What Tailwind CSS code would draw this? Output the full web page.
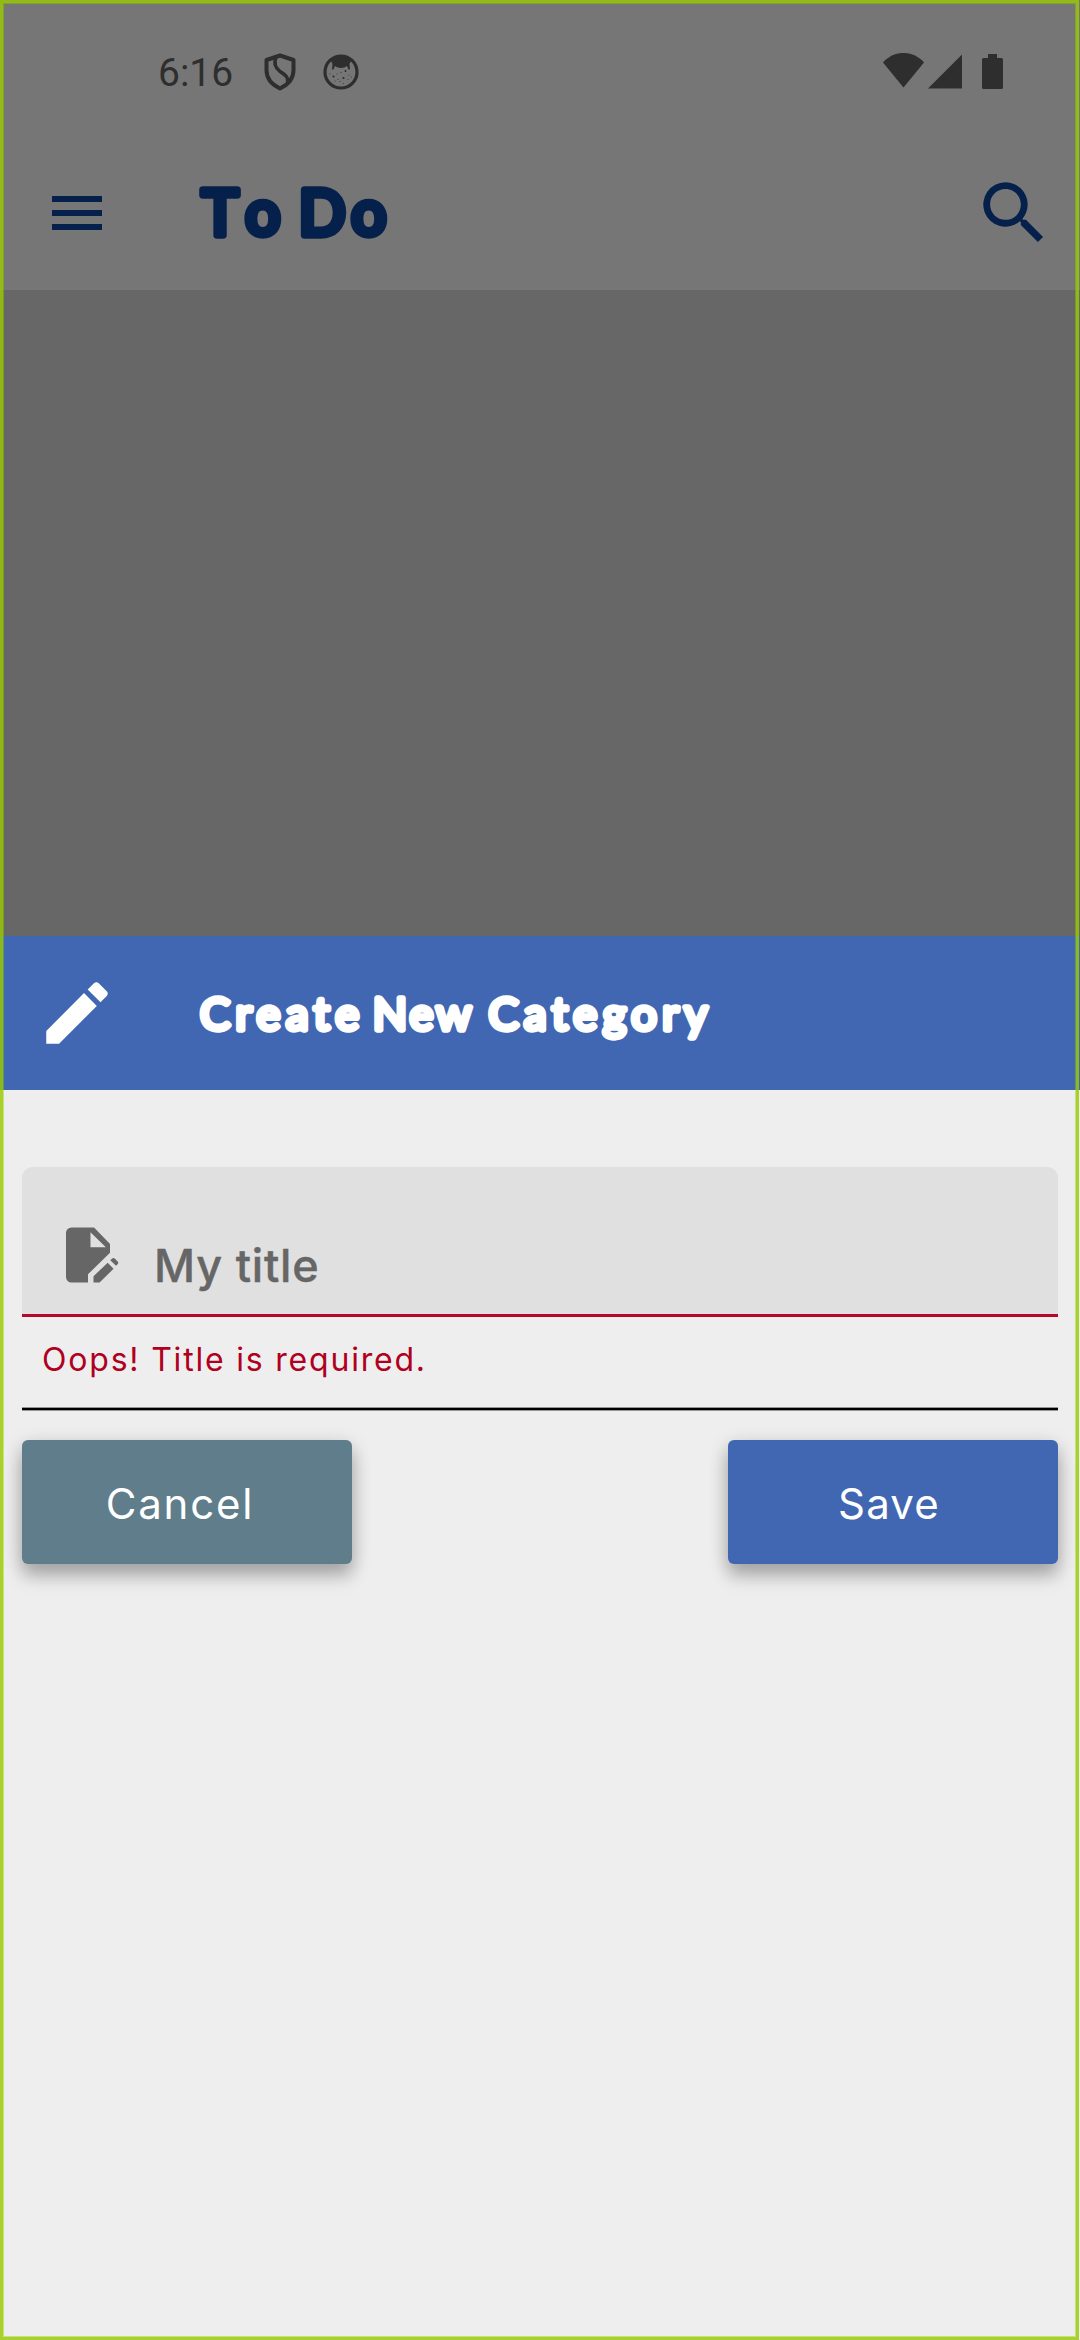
<!DOCTYPE html>
<html lang="en">
<head>
<meta charset="utf-8">
<title>To Do</title>
<script src="https://cdn.jsdelivr.net/npm/@tailwindcss/browser@4"></script>
</head>
<body class="bg-[#eee]">
<div class="relative flex flex-col w-[1080px] h-[2340px] bg-[#eee] overflow-hidden font-['Inter',sans-serif]">

  <!-- Dimmed status bar and app bar -->
  <header class="h-[290px] bg-[#767676] shrink-0">
    <div class="flex items-center h-[144px] pl-[158px] pr-[77px] text-[#2e2e2e]">
      <span class="font-['Roboto',sans-serif] text-[39px] leading-none pt-[2px]">6:16</span>
      <svg class="ml-[31px] w-[32px] h-[38px]" viewBox="0 0 32 38" fill="none" stroke="currentColor" stroke-width="4" stroke-linejoin="round">
        <path d="M16 2.5 29.5 7v10C29.5 26 23.5 32 16 35.5 8.5 32 2.5 26 2.5 17V7z"/>
        <path d="M12 4.5C9.5 10 11 14.5 16 18.5 22.5 22.5 24.5 25 23.5 29.5" stroke-width="3.5"/>
      </svg>
      <svg class="ml-[27px] w-[36px] h-[36px]" viewBox="0 0 36 36">
        <circle cx="18" cy="18" r="16" fill="none" stroke="currentColor" stroke-width="3.2"/>
        <path d="M7.500 6C13 1 23 1 28.500 6L26.500 10 27 15.500 25.500 15.500 24 12C21 14.500 15 14.500 12 12L10.500 15.500 9 15.500 9.500 10z" fill="currentColor"/>
        <g fill="currentColor">
          <circle cx="10.500" cy="22.500" r="1.100"/><circle cx="22.500" cy="17" r="1"/><circle cx="20.500" cy="24" r="1.100"/><circle cx="14" cy="20" r=".5"/><circle cx="18" cy="18.500" r=".5"/><circle cx="26" cy="21" r=".5"/><circle cx="15" cy="25.500" r=".5"/><circle cx="25" cy="25.500" r=".5"/><circle cx="12" cy="27" r=".5"/><circle cx="17" cy="27.500" r=".6"/><circle cx="20.500" cy="29.500" r=".5"/><circle cx="7" cy="20" r=".5"/><circle cx="28.500" cy="23" r=".5"/>
        </g>
      </svg>
      <svg class="ml-auto w-[41px] h-[35px] -mt-[3px]" viewBox="0 0 41 35" fill="currentColor"><path d="M0 9.500C11-3.200 30-3.200 41 9.500L20.500 34.500z"/></svg>
      <svg class="ml-[4px] w-[34px] h-[35px] -mt-[2px]" viewBox="0 0 34 35" fill="currentColor"><path d="M34 .5V34.500H0z"/></svg>
      <svg class="ml-[20px] w-[21px] h-[35px] -mt-[2px]" viewBox="0 0 21 35" fill="currentColor"><path d="M6 0h9v4h4.500A1.500 1.500 0 0 1 21 5.500v28a1.500 1.500 0 0 1-1.500 1.500h-18A1.500 1.500 0 0 1 0 33.500v-28A1.500 1.500 0 0 1 1.500 4H6z"/></svg>
    </div>
    <div class="flex items-center h-[137px] pl-[52px] pr-[25px] text-[#05204a]">
      <svg class="w-[50px] h-[34px]" viewBox="0 0 50 34" fill="currentColor"><path d="M0 0h50v6H0zM0 14h50v6H0zM0 28h50v6H0z"/></svg>
      <h1 class="ml-[97px]">
        <svg class="w-[196px] h-[81px] font-['Lato',sans-serif] text-[61px]" viewBox="0 0 196 81" fill="currentColor" stroke="currentColor" stroke-width="7.5" stroke-linejoin="round" stroke-linecap="round">
          <text x="3" y="63" textLength="78">To</text>
          <text x="100" y="63" textLength="87">Do</text>
        </svg>
      </h1>
      <svg class="ml-auto w-[82px] h-[82px]" viewBox="0 0 24 24" fill="currentColor"><path d="M9.500 3A6.500 6.500 0 0 1 16 9.500c0 1.610-.59 3.090-1.560 4.230l.27.27h.79l5 5-1.500 1.500-5-5v-.79l-.27-.27A6.500 6.500 0 1 1 9.500 3m0 2C7 5 5 7 5 9.500S7 14 9.500 14 14 12 14 9.500 12 5 9.500 5z"/></svg>
    </div>
  </header>
  <div class="h-[646px] bg-[#676767] shrink-0"></div>

  <!-- Sheet header -->
  <div class="flex items-center h-[154px] bg-[#4167b2] pl-[36px] text-white shrink-0">
    <svg class="w-[82px] h-[82px]" viewBox="0 0 24 24" fill="currentColor"><path d="M20.710 7.040c.39-.39.39-1.040 0-1.410l-2.340-2.340c-.37-.39-1.020-.39-1.410 0l-1.840 1.830 3.750 3.750M3 17.250V21h3.750L17.810 9.930l-3.750-3.750z"/></svg>
    <h2 class="ml-[79px]">
      <svg class="w-[520px] h-[80px] font-['Lato',sans-serif] text-[45px]" viewBox="0 0 520 80" fill="currentColor" stroke="currentColor" stroke-width="5.3" stroke-linejoin="round" stroke-linecap="round">
        <text x="3" y="56.500" textLength="159">Create</text>
        <text x="175.800" y="56.500" textLength="98.500">New</text>
        <text x="291.500" y="56.500" textLength="219">Category</text>
      </svg>
    </h2>
  </div>

  <!-- Form -->
  <main class="flex flex-col px-[22px] pt-[77px]">
    <div class="flex items-start h-[150px] pl-[33px] bg-[#e0e0e0] border-b-[3px] border-[#b4092a] rounded-t-[11px] text-[#666]">
      <svg class="mt-[55px] w-[66px] h-[66px]" viewBox="0 0 24 24" fill="currentColor">
        <path fill-rule="evenodd" d="M6 2h8.200L20 8v3.200l-8 7.800v3H6a2 2 0 0 1-2-2V4a2 2 0 0 1 2-2zM12.900 3.700V9.200h5.600z"/>
        <path d="M14 22v-2.300l5.150-4.850 2.150 2.150-5.100 5zM20.100 13.950l.6-.6c.35-.35.75-.35 1.100 0l.9.9c.4.4.4.800.05 1.150l-.55.55z"/>
      </svg>
      <span class="mt-[76px] ml-[33px] text-[45px] leading-[45px] font-medium tracking-[.8px] [-webkit-text-stroke:.4px_#666]">My title</span>
    </div>
    <p class="pl-[20px] mt-[26px] h-[64px] text-[32px] leading-[34px] tracking-[1.8px] text-[#b00020]">Oops! Title is required.</p>
    <div class="h-[4px] bg-black border-y border-[#959595]"></div>
    <div class="flex justify-between mt-[29px]">
      <button class="w-[330px] h-[124px] rounded-[6px] bg-[#607d8b] text-white text-[42px] leading-none tracking-[1.8px] pt-[3px] pr-[14px] shadow-[0_12px_18px_rgba(0,0,0,0.26),0_3px_20px_rgba(0,0,0,0.12)]">Cancel</button>
      <button class="w-[330px] h-[124px] rounded-[6px] bg-[#4167b2] text-white text-[42px] leading-none tracking-[1.2px] pt-[3px] pr-[8px] shadow-[0_12px_18px_rgba(0,0,0,0.26),0_3px_20px_rgba(0,0,0,0.12)]">Save</button>
    </div>
  </main>

  <!-- Translucent green outline over the whole screen -->
  <div class="absolute inset-y-0 left-0 right-px border-[3px] border-[#99cc00]/82"></div>
  <div class="absolute inset-y-[3px] left-[3px] right-[4px] border border-[#99cc00]/45"></div>
</div>
</body>
</html>
